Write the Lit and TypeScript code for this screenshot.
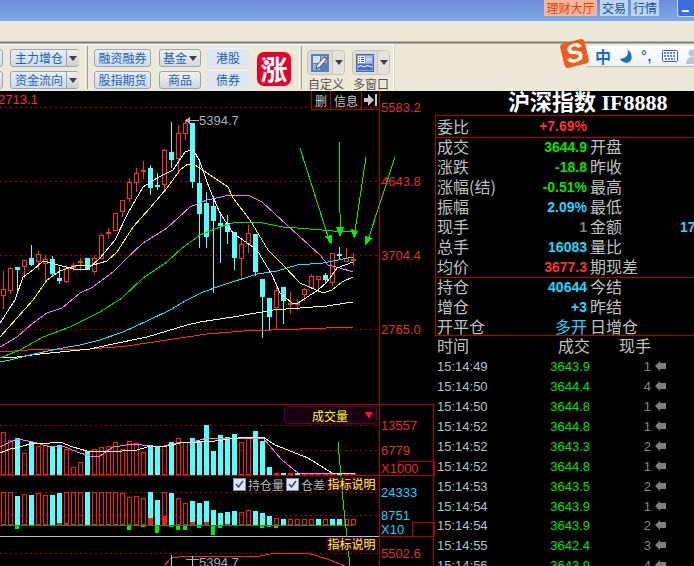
import {LitElement, html, svg, css} from 'lit';
import {customElement} from 'lit/decorators.js';

// [high, low, bodyTop, bodyBottom, isUp]  x comes from the index, 7px a candle
type Candle = [number, number, number, number, number];

const CANDLES: Candle[] = [
  [271, 308, 289, 295, 1], [267, 293, 268, 290, 1], [267, 292, 267, 269, 0], [260, 277, 260, 266, 1],
  [245, 265, 258, 264, 0], [251, 269, 254, 261, 1], [255, 282, 259, 263, 1], [256, 275, 259, 273, 0],
  [267, 283, 278, 280, 0], [265, 282, 268, 281, 1], [263, 270, 265, 267, 1], [258, 270, 261, 262, 1],
  [258, 269, 258, 269, 0], [255, 273, 258, 271, 1], [233, 258, 235, 258, 1], [228, 238, 232, 233, 1],
  [213, 230, 213, 230, 1], [200, 216, 200, 211, 1], [178, 201, 182, 198, 1], [168, 191, 173, 182, 1],
  [161, 178, 170, 171, 1], [165, 194, 168, 187, 0], [173, 189, 185, 186, 0], [149, 189, 150, 184, 1],
  [122, 167, 152, 159, 0], [125, 173, 133, 158, 1], [120, 139, 123, 133, 1], [123, 187, 123, 181, 0],
  [159, 247, 183, 213, 0], [192, 247, 203, 236, 0], [196, 292, 206, 220, 0], [212, 262, 223, 225, 0],
  [215, 243, 223, 231, 0], [232, 269, 232, 257, 0], [238, 276, 244, 258, 1], [225, 252, 233, 243, 1],
  [234, 275, 234, 271, 0], [279, 337, 279, 296, 0], [298, 330, 298, 316, 0], [283, 329, 290, 307, 1],
  [287, 323, 287, 300, 0], [292, 313, 303, 304, 1], [299, 309, 303, 304, 1], [288, 300, 289, 294, 1],
  [274, 287, 276, 287, 1], [276, 288, 276, 279, 1], [273, 283, 275, 279, 0], [253, 285, 253, 282, 1],
  [247, 258, 254, 255, 0], [248, 261, 258, 261, 1], [253, 265, 259, 260, 1],
];

const MA_LINES: {color: string; points: number[][]}[] = [
  {color: '#ff2828', points: [[0, 352], [28, 350], [90, 349], [127, 346], [167, 340], [207, 334], [243, 331], [300, 329], [353, 327]]},
  {color: '#ffffb0', points: [[0, 358], [17, 357], [40, 354], [70, 351], [90, 349], [113, 344], [147, 337], [187, 325], [200, 322], [233, 317], [273, 310], [300, 308], [327, 306], [353, 302]]},
  {color: '#20e0ff', points: [[0, 362], [10, 360], [30, 355], [57, 349], [80, 345], [100, 340], [123, 332], [147, 321], [170, 310], [187, 300], [203, 292], [223, 285], [257, 274], [277, 271], [297, 265], [323, 263], [353, 257]]},
  {color: '#00e000', points: [[0, 358], [20, 350], [43, 337], [70, 327], [100, 312], [122, 298], [143, 278], [167, 262], [182, 248], [200, 235], [220, 227], [233, 223], [258, 222], [283, 227], [310, 229], [333, 231], [358, 231]]},
  {color: '#ff70ff', points: [[0, 347], [17, 337], [33, 323], [47, 313], [62, 308], [80, 293], [93, 287], [113, 272], [125, 260], [143, 243], [167, 228], [190, 207], [207, 200], [230, 195], [250, 196], [262, 202], [287, 225], [320, 255], [328, 265], [340, 268], [353, 272]]},
  {color: '#ffff30', points: [[0, 337], [17, 318], [33, 300], [47, 280], [60, 271], [75, 266], [93, 265], [107, 261], [117, 252], [133, 227], [150, 208], [167, 188], [180, 170], [188, 164], [195, 165], [207, 173], [228, 187], [233, 198], [250, 220], [268, 250], [283, 265], [300, 283], [323, 293], [332, 290], [342, 282], [353, 277]]},
  {color: '#ffffff', points: [[0, 323], [15, 300], [23, 277], [33, 270], [43, 261], [58, 265], [78, 270], [88, 269], [100, 258], [115, 240], [128, 213], [143, 187], [157, 178], [173, 170], [185, 152], [193, 149], [200, 162], [210, 190], [220, 213], [233, 233], [257, 250], [272, 275], [280, 293], [292, 303], [298, 303], [318, 290], [327, 282], [337, 268], [353, 262]]},
];

// [top, isUp]
const VOLUME: number[][] = [
  [432, 1], [440, 1], [438, 0], [453, 1], [442, 0], [446, 1], [445, 1], [446, 0], [445, 0], [449, 1],
  [467, 1], [462, 1], [451, 0], [449, 1], [447, 1], [446, 1], [442, 1], [449, 1], [441, 1], [443, 1],
  [452, 1], [445, 0], [447, 0], [446, 1], [442, 0], [438, 1], [442, 1], [438, 0], [441, 0], [425, 0],
  [451, 0], [435, 0], [437, 0], [434, 0], [442, 1], [437, 1], [431, 0], [441, 0], [467, 0], [473, 1],
  [473, 0], [473, 1], [473, 0], [473, 1], [473, 1], [473, 1], [473, 1], [473, 1], [473, 0], [473, 1], [473, 1],
];

const VOLUME_MA: {color: string; points: number[][]}[] = [
  {color: '#ff70ff', points: [[0, 447], [10, 442], [18, 439], [33, 442], [50, 447], [63, 446], [77, 452], [90, 456], [100, 456], [113, 447], [133, 444], [160, 447], [177, 443], [193, 442], [207, 438], [235, 438], [263, 438], [282, 460], [298, 473], [355, 474]]},
  {color: '#ffffa0', points: [[0, 453], [10, 449], [20, 447], [33, 443], [50, 443], [60, 442], [73, 447], [87, 451], [107, 452], [137, 450], [147, 447], [167, 446], [180, 443], [215, 441], [238, 438], [263, 437], [275, 445], [308, 458], [332, 473], [355, 474]]},
];

// [top, isUp]
const OPEN_INT: number[][] = [
  [492, 1], [492, 1], [496, 0], [494, 1], [495, 0], [493, 1], [495, 1], [495, 0], [493, 0], [492, 1],
  [492, 1], [492, 1], [492, 0], [492, 1], [492, 1], [492, 1], [492, 1], [493, 1], [497, 1], [496, 1],
  [498, 1], [492, 0], [500, 0], [492, 1], [493, 0], [498, 1], [503, 1], [501, 0], [503, 0], [501, 0],
  [510, 0], [513, 0], [512, 0], [511, 0], [512, 1], [510, 1], [511, 0], [513, 0], [516, 0], [518, 1],
  [519, 0], [519, 1], [519, 1], [519, 1], [519, 1], [519, 0], [519, 1], [519, 0], [519, 0], [519, 1], [519, 1],
];

// [index, top] small solid red bars that sit inside the open interest bars
const OI_INNER: number[][] = [[8, 523], [9, 523], [21, 518], [23, 516], [27, 522], [29, 522], [32, 524]];
// [index, bottom] green bars that hang under the zero line
const OI_DOWN: number[][] = [[2, 529], [18, 530], [20, 527], [22, 533], [24, 527], [25, 530], [26, 530], [28, 528], [30, 535], [31, 528], [37, 528], [38, 527], [39, 528]];

const ARROWS: {line: number[][]; head: number[][]}[] = [
  {line: [[300, 148], [330, 243]], head: [[325, 236], [332, 235], [332, 245]]},
  {line: [[339.5, 142], [339.5, 190], [340.5, 235]], head: [[336, 227], [344, 227], [340, 237]]},
  {line: [[366, 157], [354, 238]], head: [[351, 229], [358, 231], [354, 239]]},
  {line: [[395, 157], [367, 243]], head: [[365, 236], [372, 238], [365, 245]]},
];

const pts = (p: number[][]) => p.map((q) => q.join(',')).join(' ');

@customElement('stock-chart')
export class StockChart extends LitElement {
  renderCandle(c: Candle, i: number) {
    const [hi, lo, top, bot, up] = c;
    const color = up ? '#ff3030' : '#54ffff';
    const left = 1 + 7 * i;
    const mid = left + 2.5;
    return svg`
      <line x1=${mid} x2=${mid} y1=${hi} y2=${lo + 1} stroke=${color}></line>
      ${up
        ? svg`<rect x=${left + 0.5} y=${top + 0.5} width="4" height=${bot - top} fill="#000" stroke=${color}></rect>`
        : svg`<rect x=${left} y=${top} width="5" height=${bot - top + 1} fill=${color}></rect>`}
    `;
  }

  renderBar(top: number, bottom: number, up: number, i: number) {
    const left = 1 + 7 * i;
    return up
      ? svg`<rect x=${left + 0.5} y=${top + 0.5} width="4" height=${bottom - top - 1} fill="none" stroke="#ff1818"></rect>`
      : svg`<rect x=${left} y=${top} width="5" height=${bottom - top} fill="#54ffff"></rect>`;
  }

  render() {
    return html`
      <svg class="plot" width="435" height="475" viewBox="0 91 435 475" shape-rendering="crispEdges">
        ${[107, 181, 255, 329, 425, 450, 492, 515, 553].map(
          (y) => svg`<line x1="0" x2="379" y1=${y + 0.5} y2=${y + 0.5} class="dots"></line>`,
        )}
        ${CANDLES.map((c, i) => this.renderCandle(c, i))}
        ${MA_LINES.map((l) => svg`<polyline points=${pts(l.points)} fill="none" stroke=${l.color}></polyline>`)}
        ${VOLUME.map((v, i) => this.renderBar(v[0], 475, v[1], i))}
        ${VOLUME_MA.map((l) => svg`<polyline points=${pts(l.points)} fill="none" stroke=${l.color}></polyline>`)}
        ${OPEN_INT.map((v, i) => this.renderBar(v[0], 525, v[1], i))}
        ${OI_INNER.map((v) => svg`<rect x=${1 + 7 * v[0]} y=${v[1]} width="5" height=${525 - v[1]} fill="#ff1818"></rect>`)}
        ${OI_DOWN.map((v) => svg`<rect x=${1 + 7 * v[0]} y="526" width="4" height=${v[1] - 526} fill="#00f000"></rect>`)}
        <line x1="0" x2="353" y1="525.5" y2="525.5" stroke="#00a000"></line>

        <rect x="0" y="404" width="435" height="1" fill="#b40000"></rect>
        <rect x="0" y="475" width="435" height="1" fill="#b40000"></rect>
        <rect x="0" y="536" width="379" height="1" fill="#c0c0c0"></rect>
        <rect x="379" y="536" width="56" height="1" fill="#b40000"></rect>
        <rect x="379" y="91" width="1" height="475" fill="#b40000"></rect>
        <rect x="433" y="404" width="1" height="162" fill="#b40000"></rect>
        <rect x="398.5" y="461.5" width="36" height="14" fill="none" stroke="#b40000"></rect>
        <rect x="412.5" y="522.5" width="22" height="14" fill="none" stroke="#b40000"></rect>

        ${ARROWS.map(
          (a) => svg`
            <polyline points=${pts(a.line)} fill="none" stroke="#00f000"></polyline>
            <polygon points=${pts(a.head)} fill="#00f000"></polygon>
          `,
        )}

        <polyline points="338,442 343,500 350,566" fill="none" stroke="#00f000"></polyline>
        <polyline points="164,566 171,558 178,557 186,556 192,556 238,556 260,556 275,553 307,553 330,560 345,566" fill="none" stroke="#ff2020"></polyline>
        <line x1="171.5" x2="171.5" y1="555" y2="566" stroke="#54ffff"></line>
        <line x1="192.5" x2="192.5" y1="556" y2="566" stroke="#54ffff"></line>

        <g class="gray-arrow">
          <line x1="186" x2="199" y1="120.5" y2="120.5" stroke="#b0b0b0"></line>
          <polygon points="185,120.5 190,117 190,124" fill="#b0b0b0"></polygon>
          <line x1="186" x2="199" y1="559.5" y2="559.5" stroke="#b0b0b0"></line>
        </g>
        <g class="txt" shape-rendering="auto">
          <text x="199" y="125" fill="#a8b4c0">5394.7</text>
          <text x="199" y="566.5" fill="#a8b4c0">5394.7</text>
          <text x="-2" y="104" fill="#ff2a2a">2713.1</text>
          <text x="381" y="112" fill="#e03030">5583.2</text>
          <text x="381" y="186" fill="#e03030">4643.8</text>
          <text x="381" y="260" fill="#e03030">3704.4</text>
          <text x="381" y="334" fill="#e03030">2765.0</text>
          <text x="381" y="430" fill="#e03030">13557</text>
          <text x="381" y="455" fill="#e03030">6779</text>
          <text x="381" y="473" fill="#e03030">X1000</text>
          <text x="381" y="497" fill="#20d0ff">24333</text>
          <text x="381" y="520" fill="#20d0ff">8751</text>
          <text x="381" y="534" fill="#20d0ff">X10</text>
          <text x="381" y="558" fill="#e03030">5502.6</text>
        </g>
      </svg>

      <div class="tools">
        <span class="tool narrow">删</span>
        <span class="tool wide">信息</span>
        <span class="tool narrow">
          <svg width="14" height="12" viewBox="0 0 14 12"><path d="M0 4h4V0l6 6-6 6V8H0z M11 0h2v12h-2z" fill="#c8c8c8"></path></svg>
        </span>
      </div>

      <div class="indicator">成交量<i class="tri"></i></div>

      <div class="legend">
        <label><i class="check"><svg width="9" height="9" viewBox="0 0 9 9"><path d="M1 4l2.5 3L8 1" fill="none" stroke="#404a70" stroke-width="1.6"></path></svg></i>持仓量</label>
        <label><i class="check"><svg width="9" height="9" viewBox="0 0 9 9"><path d="M1 4l2.5 3L8 1" fill="none" stroke="#404a70" stroke-width="1.6"></path></svg></i>仓差</label>
        <span class="hint">指标说明</span>
      </div>
      <span class="hint lower">指标说明</span>
    `;
  }

  static styles = css`
    :host {
      display: block;
      position: relative;
      width: 435px;
      height: 475px;
      background: #000;
      overflow: hidden;
      flex: none;
    }
    .plot {
      display: block;
    }
    .dots {
      stroke: #a80000;
      stroke-dasharray: 2 3;
    }
    .txt text {
      font: 13px 'Liberation Sans', sans-serif;
    }
    .tools {
      position: absolute;
      top: 0;
      left: 311px;
      display: flex;
      height: 18px;
      border: 1px solid #b40000;
      border-top: 0;
      box-sizing: content-box;
    }
    .tool {
      display: flex;
      align-items: center;
      justify-content: center;
      box-sizing: border-box;
      height: 18px;
      color: #c8c8c8;
      font: 12px 'Noto Sans CJK SC', sans-serif;
    }
    .tool + .tool {
      border-left: 1px solid #b40000;
    }
    .narrow {
      width: 18px;
    }
    .wide {
      width: 31px;
    }
    .indicator {
      position: absolute;
      left: 284px;
      top: 315px;
      box-sizing: border-box;
      width: 93px;
      height: 18px;
      padding-left: 27px;
      display: flex;
      align-items: center;
      background: #180010;
      border: 1px solid #600030;
      border-radius: 4px;
      color: #ffff30;
      font: 12px 'Noto Sans CJK SC', sans-serif;
    }
    .tri {
      margin-left: 17px;
      border: 4px solid transparent;
      border-top: 7px solid #ff1030;
      border-bottom: 0;
    }
    .legend {
      position: absolute;
      left: 233px;
      top: 386px;
      display: flex;
      align-items: center;
      height: 14px;
      color: #b4b4b4;
      font: 12px 'Noto Sans CJK SC', sans-serif;
    }
    .legend label {
      display: flex;
      align-items: center;
      gap: 2px;
      margin-right: 2px;
    }
    .legend label:nth-child(2) {
      margin-right: 1px;
    }
    .check {
      display: flex;
      align-items: center;
      justify-content: center;
      box-sizing: border-box;
      width: 13px;
      height: 13px;
      background: #dfe6f2;
      border: 1px solid #8090b0;
    }
    .hint {
      display: inline-block;
      padding: 0 1.5px;
      line-height: 14px;
      background: #300020;
      color: #ffff30;
      font: 12px/14px 'Noto Sans CJK SC', sans-serif;
      border-radius: 2px;
    }
    .lower {
      position: absolute;
      left: 326px;
      top: 446px;
    }
  `;
}

const SIDE_ROWS = [
  [
    {a: '成交', v: '3644.9', c: 'green', b: '开盘'},
    {a: '涨跌', v: '-18.8', c: 'green', b: '昨收'},
    {a: '涨幅(结)', v: '-0.51%', c: 'green', b: '最高'},
    {a: '振幅', v: '2.09%', c: 'cyan', b: '最低'},
    {a: '现手', v: '1', c: 'gray', b: '金额', x: '17'},
    {a: '总手', v: '16083', c: 'cyan', b: '量比'},
    {a: '均价', v: '3677.3', c: 'red', b: '期现差'},
  ],
  [
    {a: '持仓', v: '40644', c: 'cyan', b: '今结'},
    {a: '增仓', v: '+3', c: 'cyan', b: '昨结'},
    {a: '开平仓', v: '多开', c: 'cyan cjk', b: '日增仓'},
  ],
];

const TICKS = [
  ['15:14:49', '3643.9', '1'], ['15:14:50', '3644.4', '4'], ['15:14:50', '3644.8', '1'],
  ['15:14:52', '3644.8', '1'], ['15:14:52', '3643.3', '2'], ['15:14:52', '3644.8', '1'],
  ['15:14:53', '3643.5', '2'], ['15:14:54', '3643.9', '1'], ['15:14:54', '3643.9', '2'],
  ['15:14:55', '3642.4', '3'], ['15:14:56', '3643.9', '4'],
];

@customElement('quote-panel')
export class QuotePanel extends LitElement {
  row(r: {a: string; v: string; c: string; b?: string; x?: string}) {
    return html`
      <div class="row">
        <span>${r.a}</span>
        <span class="val ${r.c}">${r.v}</span>
        <span class="second">${r.b}</span>
        <span class="val cyan extra">${r.x}</span>
      </div>
    `;
  }

  render() {
    return html`
      <h1>沪深指数 IF8888</h1>
      <section class="boxed">${this.row({a: '委比', v: '+7.69%', c: 'red'})}</section>
      <section class="quotes">${SIDE_ROWS[0].map((r) => this.row(r))}</section>
      <section class="position">${SIDE_ROWS[1].map((r) => this.row(r))}</section>
      <div class="ticks">
        <div class="tick head"><span>时间</span><span class="price">成交</span><span class="hand">现手</span></div>
        ${TICKS.map(
          (t) => html`
            <div class="tick">
              <span class="time">${t[0]}</span>
              <span class="price num">${t[1]}</span>
              <span class="hand num">${t[2]}</span>
              <svg width="11" height="10" viewBox="0 0 11 10"><path d="M0 5l5-5v2h6v6H5v2z" fill="#808080"></path></svg>
            </div>
          `,
        )}
      </div>
    `;
  }

  static styles = css`
    :host {
      display: block;
      flex: 1;
      height: 475px;
      overflow: hidden;
      background: #000;
      color: #c0c0c0;
      font: 16px 'Noto Sans CJK SC', sans-serif;
    }
    h1 {
      margin: 0;
      height: 24px;
      padding-left: 73px;
      color: #fff;
      font: bold 22px/24px 'Liberation Serif', 'Noto Sans CJK SC', serif;
      white-space: nowrap;
    }
    section {
      border-left: 1px solid #b40000;
      border-bottom: 1px solid #b40000;
      padding-left: 1px;
    }
    .boxed {
      border-top: 1px solid #b40000;
      height: 21px;
    }
    .quotes {
      box-sizing: border-box;
      height: 141px;
      margin-top: -1px;
    }
    .position {
      box-sizing: border-box;
      height: 59px;
      margin-top: -1px;
    }
    .row {
      display: grid;
      grid-template-columns: 60px 90px 3px 90px 50px;
      height: 20px;
      line-height: 18px;
      white-space: nowrap;
    }
    .boxed .row {
      line-height: 20px;
    }
    .second {
      grid-column: 4;
    }
    .val {
      text-align: right;
      font: bold 14px/20px 'Liberation Sans', sans-serif;
    }
    .extra {
      text-align: left;
    }
    .green {
      color: #00e600;
    }
    .cyan {
      color: #20d8ff;
    }
    .red {
      color: #ff3030;
    }
    .gray {
      color: #808080;
    }
    .cjk {
      font: 16px/18px 'Noto Sans CJK SC', sans-serif;
    }
    .ticks {
      padding-left: 2px;
    }
    .tick {
      display: flex;
      align-items: center;
      height: 20px;
      font: 13px 'Liberation Sans', sans-serif;
    }
    .tick:nth-child(10) {
      margin-top: -1px;
    }
    .head {
      box-sizing: border-box;
      padding-bottom: 2px;
      font: 16px 'Noto Sans CJK SC', sans-serif;
    }
    .tick span:first-child {
      width: 60px;
    }
    .time {
      color: #b8c0c8;
    }
    .price {
      width: 93px;
      text-align: right;
    }
    .num.price {
      color: #00e600;
    }
    .hand {
      width: 61px;
      text-align: right;
    }
    .num.hand {
      color: #808890;
    }
    .tick svg {
      margin-left: 4px;
    }
  `;
}

@customElement('app-toolbar')
export class AppToolbar extends LitElement {
  render() {
    return html`
      <div class="stub col"><i class="btn"></i><i class="btn"></i></div>
      <div class="col g1">
        <div class="btn split"><span>主力增仓</span><b><i class="caret"></i></b></div>
        <div class="btn split"><span>资金流向</span><b><i class="caret"></i></b></div>
      </div>
      <i class="sep s1"></i>
      <div class="col g2">
        <div class="btn">融资融券</div>
        <div class="btn">股指期货</div>
      </div>
      <div class="col g3">
        <div class="btn">基金<i class="caret small"></i></div>
        <div class="btn">商品</div>
      </div>
      <div class="col g4 flat">
        <div class="btn">港股</div>
        <div class="btn">债券</div>
      </div>
      <div class="logo"><i></i>涨</div>
      <i class="sep s2"></i>
      <div class="tall t1">
        <div class="icon-btn">
          <div class="ic">
            <svg width="18" height="18" viewBox="0 0 18 18">
              <rect x="0.5" y="0.5" width="17" height="17" fill="#4f7fc4" stroke="#6a7f9c"></rect>
              <path d="M2 2h7v7H2z" fill="#cfe2f7"></path>
              <path d="M10 2h6v7h-6zM2 10h7v6H2z" fill="#8db4e4"></path>
              <path d="M5 15l1-4 7-8 3 2-7 8z" fill="#f4e8d0" stroke="#22344e" stroke-width="0.8"></path>
              <path d="M12.500 3.500l3 2 .8-1.500-2.500-1.800z" fill="#d83838"></path>
            </svg>
          </div>
          <div class="dd"><i class="caret"></i></div>
        </div>
        <span>自定义</span>
      </div>
      <div class="tall t2">
        <div class="icon-btn">
          <div class="ic">
            <svg width="18" height="18" viewBox="0 0 18 18">
              <rect x="0.5" y="0.5" width="17" height="17" fill="#7fa0d8" stroke="#4a68a8"></rect>
              <path d="M2 2h7v7H2z" fill="#f4f6fb"></path>
              <path d="M3 3.500h1M3 5.500h1M3 7.500h1" stroke="#d03030"></path>
              <path d="M5 3.500h3M5 5.500h3M5 7.500h3" stroke="#3858a8"></path>
              <path d="M10 2h6v7h-6z" fill="#a8c4ec"></path>
              <path d="M2 10h14v6H2z" fill="#4a6cc0"></path>
              <path d="M2 13l3-1.500 3 1.500 3-1.500 5 1.500M10 6l2-1.500 2 1.500 2-1" fill="none" stroke="#fff"></path>
            </svg>
          </div>
          <div class="dd"><i class="caret"></i></div>
        </div>
        <span>多窗口</span>
      </div>
      <i class="end"></i>
    `;
  }

  static styles = css`
    :host {
      display: flex;
      align-items: flex-start;
      box-sizing: border-box;
      height: 47px;
      padding-top: 5px;
      background: linear-gradient(#fff, #fff) 0 0 / 393px 1px no-repeat, #ece9d8;
      font: 12px 'Noto Sans CJK SC', sans-serif;
      overflow: hidden;
    }
    .col {
      display: flex;
      flex-direction: column;
      gap: 4px;
      flex: none;
    }
    .btn {
      display: flex;
      align-items: center;
      justify-content: center;
      box-sizing: border-box;
      height: 18px;
      border: 1px solid #a0a4a8;
      border-radius: 3px;
      background: linear-gradient(#e8eef8, #ccdbef);
      color: #1c62b8;
      line-height: 16px;
      white-space: nowrap;
    }
    .stub {
      width: 3px;
      margin-right: 7px;
      overflow: hidden;
    }
    .stub .btn {
      width: 9px;
      margin-left: -6px;
    }
    .g1 {
      width: 69px;
    }
    .split {
      justify-content: flex-start;
      padding-left: 4px;
    }
    .split span {
      width: 51px;
    }
    .split b {
      align-self: stretch;
      flex: 1;
      display: flex;
      align-items: center;
      justify-content: center;
      margin-right: -1px;
      border-left: 1px solid #a0a0a0;
      background: linear-gradient(#f0f0f0, #cfcfcf);
      border-radius: 0 3px 3px 0;
    }
    .caret {
      display: inline-block;
      border: 4px solid transparent;
      border-top: 5px solid #404040;
      border-bottom: 0;
    }
    .small {
      margin-left: 2px;
    }
    .sep {
      flex: none;
      width: 3px;
      height: 43px;
      margin-top: -3px;
      background: #d8d5c4;
      border-left: 1px solid #fff;
      border-right: 1px solid #a8a594;
      box-sizing: border-box;
    }
    .s1 {
      margin: -3px 6px 0 6px;
    }
    .g2 {
      width: 57px;
      margin-right: 8px;
    }
    .g3 {
      width: 42px;
      margin-right: 6px;
    }
    .g3 .btn {
      color: #1c62b8;
      background: linear-gradient(#f2f2ee, #d0d8e2);
    }
    .g4 {
      width: 42px;
      margin-top: -1px;
      gap: 3px;
      margin-right: 8px;
    }
    .flat .btn {
      height: 19px;
      border: 0;
      border-radius: 0;
      background: #dde6f1;
      box-shadow: inset 0 1px #eef;
    }
    .logo {
      position: relative;
      flex: none;
      width: 34px;
      height: 34px;
      margin-top: 3px;
      border-radius: 7px;
      background: #e8002c;
      color: #fff;
      font: bold 27px/33px 'Noto Sans CJK SC', sans-serif;
      text-align: center;
    }
    .logo i {
      position: absolute;
      left: 6px;
      top: 7px;
      width: 5px;
      height: 5px;
      border-radius: 50%;
      background: #fff;
      border: 1px solid #e8002c;
    }
    .s2 {
      margin: -3px 5px 0 8px;
    }
    .tall {
      flex: none;
      width: 38px;
      text-align: center;
      color: #555;
      line-height: 16px;
    }
    .t2 {
      margin-left: 7px;
    }
    .icon-btn {
      display: flex;
      box-sizing: border-box;
      height: 25px;
      margin-top: 1px;
      border: 1px solid #c4c4bc;
      border-radius: 4px;
      background: #dcdcd6;
      margin-bottom: 1px;
    }
    .ic {
      display: flex;
      align-items: center;
      width: 25px;
      padding-left: 3px;
      box-sizing: border-box;
      border-right: 1px solid #c4c4bc;
    }
    .ic svg {
      flex: none;
    }
    .dd {
      flex: 1;
      display: flex;
      align-items: center;
      justify-content: center;
      background: #e4e3da;
      border-radius: 0 3px 3px 0;
    }
    .end {
      flex: none;
      width: 2px;
      height: 47px;
      margin: -5px 0 0 3px;
      box-sizing: border-box;
      border-left: 1px solid #fff;
      border-right: 1px solid #d8d5c4;
    }
  `;
}

@customElement('app-root')
export class AppRoot extends LitElement {
  render() {
    return html`
      <header class="title">
        <span class="link hot">理财大厅</span>
        <span class="link">交易</span>
        <span class="link">行情</span>
        <span class="min"><i></i></span>
      </header>
      <div class="band"></div>
      <div class="rule"></div>
      <app-toolbar></app-toolbar>
      <div class="main">
        <stock-chart></stock-chart>
        <quote-panel></quote-panel>
      </div>
      <div class="ime">
        <span class="s-logo">S</span>
        <span class="zh">中</span>
        <svg class="moon" width="14" height="15" viewBox="0 0 15 15"><path d="M9 0C11 5 8 10 1 10 3 13.500 7 15 10 14 15 12 15 4 9 0z" fill="#1c6cc0"></path></svg>
        <span class="punct">°,</span>
        <svg class="kb" width="16" height="12" viewBox="0 0 16 12">
          <rect x="0.5" y="0.5" width="15" height="11" rx="1" fill="#fff" stroke="#1c6cc0"></rect>
          <path d="M2 3h12M2 6h12M3 9h10" stroke="#1c6cc0" stroke-width="1.500" stroke-dasharray="2 1"></path>
        </svg>
        <svg class="me" width="12" height="15" viewBox="0 0 12 15"><circle cx="6" cy="4" r="3.500" fill="#b8c8dc"></circle><path d="M0 15c0-5 3-7 6-7s6 2 6 7z" fill="#b8c8dc"></path></svg>
      </div>
    `;
  }

  static styles = css`
    :host {
      display: block;
      position: relative;
      width: 694px;
      height: 566px;
      overflow: hidden;
      background: #ece9d8;
    }
    .title {
      display: flex;
      align-items: flex-start;
      justify-content: flex-end;
      gap: 3px;
      box-sizing: border-box;
      height: 21px;
      padding-right: 35px;
      background: linear-gradient(#6d8cdc, #7eaaec);
      position: relative;
    }
    .link {
      box-sizing: border-box;
      height: 16px;
      padding: 0 2px;
      background: #bcd4f2;
      color: #1c4f90;
      font: 12px/15px 'Noto Sans CJK SC', sans-serif;
    }
    .hot {
      padding: 0 2.5px;
      background: #f8b498;
      color: #e04008;
    }
    .min {
      position: absolute;
      right: 0;
      top: 0;
      width: 17px;
      height: 17px;
      box-sizing: border-box;
      border: 1px solid #d0e0f8;
      border-right: 0;
      border-top: 0;
      border-radius: 0 0 0 3px;
      background: #3a6ee0;
    }
    .min i {
      position: absolute;
      left: 4px;
      top: 10px;
      width: 7px;
      height: 2px;
      background: #fff;
    }
    .band {
      height: 20px;
    }
    .rule {
      height: 3px;
      background: linear-gradient(#d0cfc4, #807e74 50%, #c8c6b8);
    }
    .main {
      display: flex;
      height: 475px;
    }
    .ime {
      position: absolute;
      left: 587px;
      top: 46px;
      width: 107px;
      height: 20px;
      display: flex;
      align-items: center;
      gap: 8px;
      padding-left: 8px;
      box-sizing: border-box;
      background: linear-gradient(#fff, #eef2f8);
      box-shadow: 0 1px 1px #b8b8c8;
      overflow: visible;
    }
    .s-logo {
      position: absolute;
      left: -25px;
      top: -5px;
      width: 25px;
      height: 25px;
      border-radius: 4px;
      transform: rotate(-14deg);
      background: #f25a1c;
      color: #fff;
      font: italic bold 26px/25px 'Liberation Sans', sans-serif;
      text-align: center;
    }
    .zh {
      color: #1c6cc0;
      font: bold 16px 'Noto Sans CJK SC', sans-serif;
    }
    .moon {
      flex: none;
    }
    .punct {
      color: #1c6cc0;
      font: bold 14px/14px 'Liberation Sans', sans-serif;
      letter-spacing: 1px;
    }
    .kb {
      flex: none;
      margin-left: 1px;
    }
    .me {
      flex: none;
    }
  `;
}

declare global {
  interface HTMLElementTagNameMap {
    'app-root': AppRoot;
    'app-toolbar': AppToolbar;
    'stock-chart': StockChart;
    'quote-panel': QuotePanel;
  }
}
